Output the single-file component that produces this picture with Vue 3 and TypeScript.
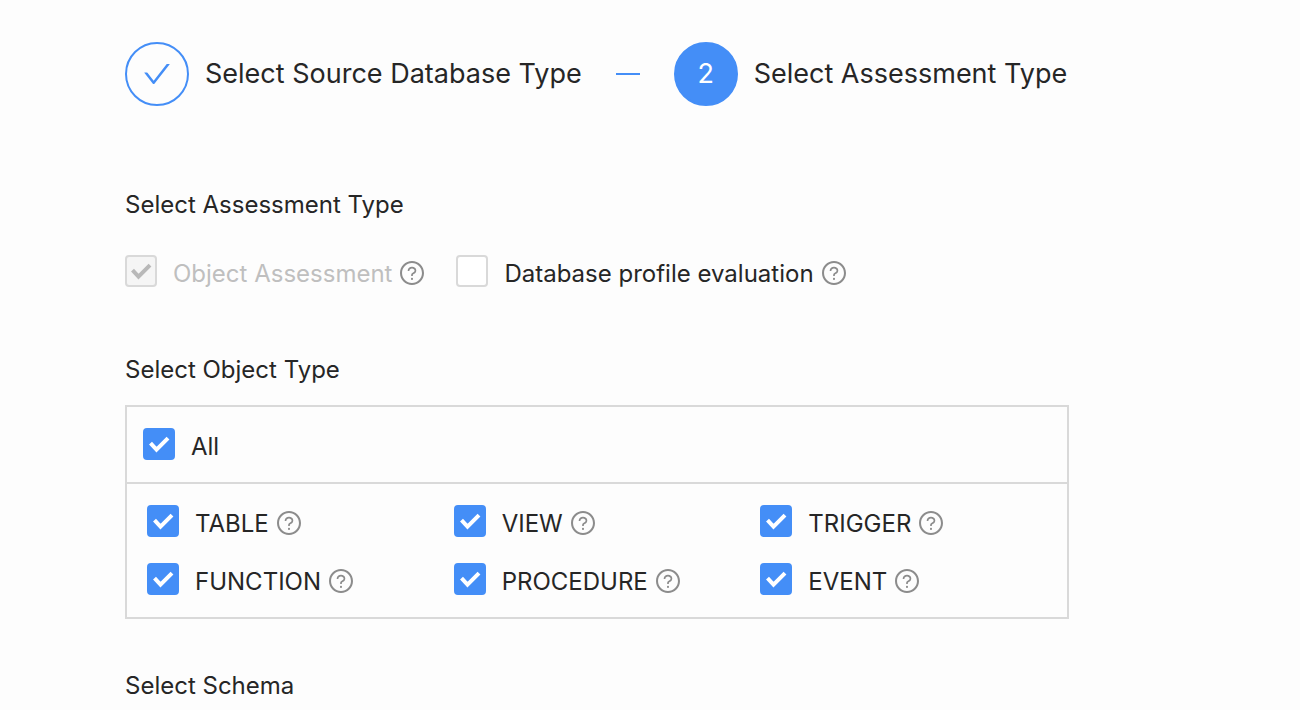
<script setup lang="ts">
import { computed, reactive, ref } from 'vue'

interface ObjectType {
  name: string
  checked: boolean
}

const questionPath =
  'M512 64C264.6 64 64 264.6 64 512s200.6 448 448 448 448-200.6 448-448S759.4 64 512 64zm0 820c-205.4 0-372-166.6-372-372s166.6-372 372-372 372 166.6 372 372-166.6 372-372 372z M623.6 316.7C593.6 290.4 554 276 512 276s-81.6 14.5-111.6 40.7C369.2 344 352 380.7 352 420v7.6c0 4.4 3.6 8 8 8h48c4.4 0 8-3.6 8-8V420c0-44.1 43.1-80 96-80s96 35.9 96 80c0 31.1-22 59.6-56.1 72.7-21.2 8.1-39.2 22.3-52.1 40.9-13.1 19-19.9 41.8-19.9 64.9V620c0 4.4 3.6 8 8 8h48c4.4 0 8-3.6 8-8v-22.7a48.3 48.3 0 0130.9-44.8c59-22.7 97.1-74.7 97.1-132.5.1-39.3-17.1-76-48.3-103.3zM472 732a40 40 0 1080 0 40 40 0 10-80 0z'

const profileEvaluation = ref(false)

const objectTypes = reactive<ObjectType[]>(
  ['TABLE', 'VIEW', 'TRIGGER', 'FUNCTION', 'PROCEDURE', 'EVENT'].map((name) => ({
    name,
    checked: true,
  })),
)

const allChecked = computed<boolean>({
  get: () => objectTypes.every((type) => type.checked),
  set: (value) => objectTypes.forEach((type) => (type.checked = value)),
})
</script>

<template>
  <main class="page">
    <ol class="steps">
      <li class="step">
        <span class="badge done">
          <svg class="badge-check" viewBox="64 64 896 896" aria-hidden="true">
            <path
              d="M912 190h-69.9c-9.8 0-19.1 4.5-25.1 12.2L404.7 724.5 207 474a32 32 0 00-25.1-12.2H112c-6.7 0-10.4 7.7-6.3 12.9l273.9 347c12.8 16.2 37.4 16.2 50.3 0l488.4-618.9c4.1-5.1.4-12.8-6.3-12.8z"
            />
          </svg>
        </span>
        <span class="step-title">Select Source Database Type</span>
      </li>
      <li class="dash" aria-hidden="true"></li>
      <li class="step" aria-current="step">
        <span class="badge current">2</span>
        <span class="step-title">Select Assessment Type</span>
      </li>
    </ol>

    <section class="section">
      <h2 class="heading">Select Assessment Type</h2>
      <div class="choices">
        <div class="choice">
          <label class="check disabled">
            <span class="box">
              <input type="checkbox" checked disabled />
              <svg class="tick" viewBox="0 0 32 32" aria-hidden="true">
                <path d="M7.5 15.2l6 6.4L25 10.2" />
              </svg>
            </span>
            <span>Object Assessment</span>
          </label>
          <button class="help" type="button" aria-label="About Object Assessment">
            <svg viewBox="64 64 896 896" aria-hidden="true"><path :d="questionPath" /></svg>
          </button>
        </div>
        <div class="choice">
          <label class="check">
            <span class="box">
              <input v-model="profileEvaluation" type="checkbox" />
              <svg class="tick" viewBox="0 0 32 32" aria-hidden="true">
                <path d="M7.5 15.2l6 6.4L25 10.2" />
              </svg>
            </span>
            <span>Database profile evaluation</span>
          </label>
          <button class="help" type="button" aria-label="About Database profile evaluation">
            <svg viewBox="64 64 896 896" aria-hidden="true"><path :d="questionPath" /></svg>
          </button>
        </div>
      </div>
    </section>

    <section class="section">
      <h2 class="heading">Select Object Type</h2>
      <div class="panel">
        <div class="panel-head">
          <label class="check">
            <span class="box">
              <input v-model="allChecked" type="checkbox" />
              <svg class="tick" viewBox="0 0 32 32" aria-hidden="true">
                <path d="M7.5 15.2l6 6.4L25 10.2" />
              </svg>
            </span>
            <span>All</span>
          </label>
        </div>
        <div class="panel-body">
          <div v-for="type in objectTypes" :key="type.name" class="choice">
            <label class="check">
              <span class="box">
                <input v-model="type.checked" type="checkbox" />
                <svg class="tick" viewBox="0 0 32 32" aria-hidden="true">
                  <path d="M7.5 15.2l6 6.4L25 10.2" />
                </svg>
              </span>
              <span>{{ type.name }}</span>
            </label>
            <button class="help" type="button" :aria-label="`About ${type.name}`">
              <svg viewBox="64 64 896 896" aria-hidden="true"><path :d="questionPath" /></svg>
            </button>
          </div>
        </div>
      </div>
    </section>

    <section class="section schema">
      <h2 class="heading">Select Schema</h2>
    </section>
  </main>
</template>

<style>
body {
  background: #fdfdfd;
}
</style>

<style scoped>
.page {
  padding: 42px 231px 0 125px;
  font-family: Inter, 'Liberation Sans', sans-serif;
  font-size: 24px;
  line-height: 36px;
  color: #262626;
}

.steps {
  display: flex;
  align-items: center;
  gap: 34px;
  margin: 0;
  padding: 0;
  list-style: none;
}

.step {
  display: flex;
  align-items: center;
  gap: 16px;
  white-space: nowrap;
}

.step-title {
  font-size: 27px;
}

.badge {
  display: flex;
  align-items: center;
  justify-content: center;
  box-sizing: border-box;
  width: 64px;
  height: 64px;
  border: 2px solid #448ef7;
  border-radius: 50%;
}

.current {
  background: #448ef7;
  color: #fff;
  font-size: 27px;
}

.badge-check {
  width: 28px;
  height: 28px;
  fill: #448ef7;
}

.dash {
  width: 24px;
  height: 2px;
  background: #448ef7;
}

.section {
  margin-top: 59px;
}

.steps + .section {
  margin-top: 81px;
}

.schema {
  margin-top: 49px;
}

.heading {
  margin: 0;
  font-size: 24px;
  font-weight: 400;
  line-height: 36px;
}

.choices {
  display: flex;
  gap: 32px;
  margin-top: 32px;
}

.choice {
  display: flex;
  align-items: center;
  gap: 8px;
  white-space: nowrap;
}

.check {
  display: flex;
  align-items: flex-start;
  gap: 16px;
  line-height: 38px;
  cursor: pointer;
}

.check.disabled {
  color: #bfbfbf;
  cursor: not-allowed;
}

.box {
  position: relative;
  width: 32px;
  height: 32px;
}

.box input {
  appearance: none;
  display: block;
  box-sizing: border-box;
  width: 32px;
  height: 32px;
  margin: 0;
  border: 2px solid #d9d9d9;
  border-radius: 4px;
  background: #fff;
}

.box input:checked {
  border-color: #448ef7;
  background: #448ef7;
}

.box input:disabled {
  border-color: #d9d9d9;
  background: #f5f5f5;
}

.tick {
  display: none;
  position: absolute;
  inset: 0;
  fill: none;
  stroke: #fff;
  stroke-width: 4;
  pointer-events: none;
}

.box input:checked + .tick {
  display: block;
}

.box input:disabled + .tick {
  stroke: #b8b8b8;
}

.help {
  display: block;
  width: 24px;
  height: 24px;
  margin-bottom: 2px;
  padding: 0;
  border: 0;
  background: none;
  cursor: help;
}

.help svg {
  display: block;
  fill: #8c8c8c;
}

.panel {
  margin-top: 17px;
  border: 2px solid #d9d9d9;
}

.panel-head {
  display: flex;
  padding: 21px 16px 16px;
  border-bottom: 2px solid #d9d9d9;
}

.panel-body {
  display: grid;
  grid-template-columns: repeat(3, 1fr);
  row-gap: 20px;
  padding: 21px 0 16px 20px;
}
</style>
